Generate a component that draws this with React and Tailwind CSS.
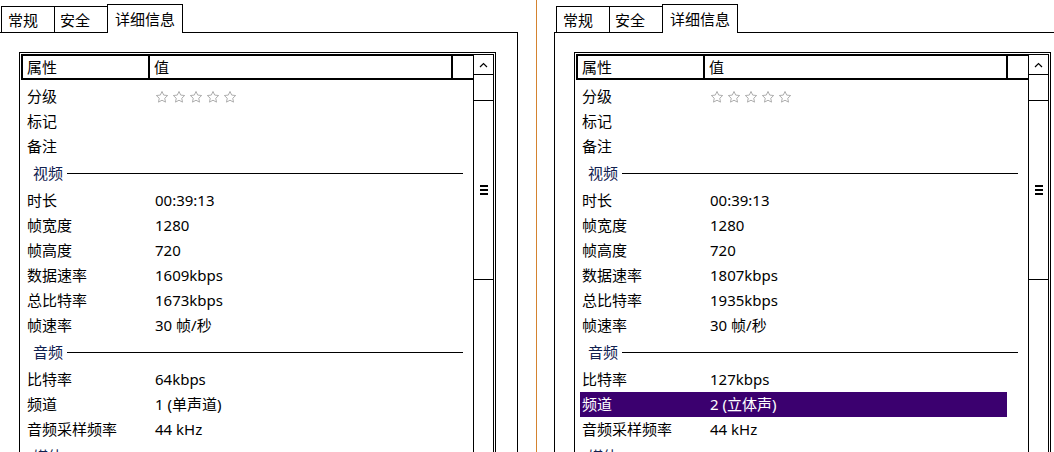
import React from 'react';

const FONT = "font-['Noto_Sans','Noto_Sans_CJK_SC',sans-serif]";

const LEFT = [
  { k: '分级', stars: true },
  { k: '标记' },
  { k: '备注' },
  { section: '视频' },
  { k: '时长', v: '00:39:13' },
  { k: '帧宽度', v: '1280' },
  { k: '帧高度', v: '720' },
  { k: '数据速率', v: '1609kbps' },
  { k: '总比特率', v: '1673kbps' },
  { k: '帧速率', v: '30 帧/秒' },
  { section: '音频' },
  { k: '比特率', v: '64kbps' },
  { k: '频道', v: '1 (单声道)' },
  { k: '音频采样频率', v: '44 kHz' },
  { section: '媒体' },
];

const RIGHT = [
  { k: '分级', stars: true },
  { k: '标记' },
  { k: '备注' },
  { section: '视频' },
  { k: '时长', v: '00:39:13' },
  { k: '帧宽度', v: '1280' },
  { k: '帧高度', v: '720' },
  { k: '数据速率', v: '1807kbps' },
  { k: '总比特率', v: '1935kbps' },
  { k: '帧速率', v: '30 帧/秒' },
  { section: '音频' },
  { k: '比特率', v: '127kbps' },
  { k: '频道', v: '2 (立体声)', selected: true },
  { k: '音频采样频率', v: '44 kHz' },
  { section: '媒体' },
];

function Stars() {
  return (
    <div className="flex gap-[3px]">
      {[0, 1, 2, 3, 4].map(i => (
        <svg key={i} width="14" height="14" viewBox="0 0 24 24">
          <path
            d="M12 2.5l2.9 6.2 6.8.8-5 4.6 1.3 6.7L12 17.5l-6 3.3 1.3-6.7-5-4.6 6.8-.8z"
            fill="white"
            stroke="#a8a8a8"
            strokeWidth="1.6"
            strokeLinejoin="round"
          />
        </svg>
      ))}
    </div>
  );
}

function Row({ k, v, stars, selected }) {
  return (
    <div className={`flex items-center h-[25px] w-[427px] px-[2px] ${selected ? 'bg-[#3b006f] text-white' : 'text-black'}`}>
      <span className="w-[128px] shrink-0">{k}</span>
      {stars ? <Stars /> : <span>{v}</span>}
    </div>
  );
}

function Section({ label }) {
  return (
    <div className="flex items-center h-[29px] w-[438px] pl-[8px]">
      <span className="text-[#10204f]">{label}</span>
      <div className="ml-[4px] flex-1 h-px bg-black" />
    </div>
  );
}

function Scrollbar() {
  return (
    <div className="w-[21px] shrink-0 border-x border-black flex flex-col">
      <div className="h-[21px] border-y border-black flex items-center justify-center">
        <svg width="9" height="6" viewBox="0 0 9 6">
          <polyline points="1,5 4.5,1.5 8,5" fill="none" stroke="black" strokeWidth="1.2" />
        </svg>
      </div>
      <div className="h-[25px]" />
      <div className="h-[180px] border-y border-black flex flex-col items-center justify-center gap-[2px]">
        <div className="w-[8px] h-[2px] bg-black" />
        <div className="w-[8px] h-[2px] bg-black" />
        <div className="w-[8px] h-[2px] bg-black" />
      </div>
    </div>
  );
}

function Panel({ rows }) {
  return (
    <div className="w-[519px] shrink-0 flex flex-col">
      {/* tabs */}
      <div className="relative z-10 flex items-end h-[32px] pl-[2px]">
        <div className="h-[26px] w-[54px] border border-b-0 border-black pl-[6px] pt-[2px] flex items-center">常规</div>
        <div className="h-[26px] w-[53px] border-t border-r border-black pl-[5px] pt-[2px] flex items-center">安全</div>
        <div className="-ml-px -mb-px h-[29px] w-[76px] border border-b-0 border-black bg-white pl-[7px] flex items-center">详细信息</div>
      </div>

      {/* tab page */}
      <div className="h-[430px] border-t border-x border-black pt-[19px] pl-[19px]">
        <div className="w-[477px] h-[420px] border border-black p-px flex">
          <div className="w-[452px] shrink-0">
            <div className="flex h-[26px] border-y-2 border-black">
              <div className="w-[129px] border-x-2 border-black pl-[4px] flex items-center">属性</div>
              <div className="w-[303px] border-r-2 border-black pl-[4px] flex items-center">值</div>
              <div className="flex-1" />
            </div>
            <div className="pt-[4px] pl-[4px]">
              {rows.map((r, i) =>
                r.section
                  ? <Section key={i} label={r.section} />
                  : <Row key={i} {...r} />
              )}
            </div>
          </div>
          <Scrollbar />
        </div>
      </div>
    </div>
  );
}

export default function App() {
  return (
    <div className={`w-[1054px] h-[452px] overflow-hidden bg-white flex text-[15px] leading-none text-black ${FONT}`}>
      <div className="w-[536px] shrink-0 overflow-hidden">
        <div className="-ml-px">
          <Panel rows={LEFT} />
        </div>
      </div>
      <div className="w-px shrink-0 bg-[#d4832f]" />
      <div className="flex-1 overflow-hidden">
        <div className="ml-[17px]">
          <Panel rows={RIGHT} />
        </div>
      </div>
    </div>
  );
}
